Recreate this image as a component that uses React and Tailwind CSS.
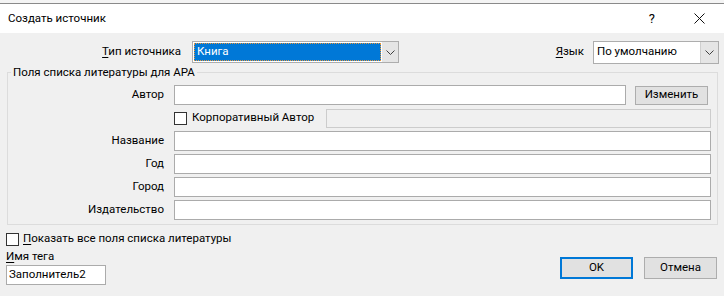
import React from "react";

const font = { fontFamily: 'Roboto, "Noto Sans", sans-serif' };

function Chevron() {
  return (
    <svg width="9" height="5" viewBox="0 0 9 5" fill="none">
      <path d="M0.5 0.5 L4.5 4.5 L8.5 0.5" stroke="#404040" strokeWidth="1" />
    </svg>
  );
}

function Field({ className = "" }) {
  return <div className={"h-[20px] border border-[#ababab] bg-white " + className} />;
}

function Row({ label, children }) {
  return (
    <div className="flex h-[20px] items-center">
      <div className="w-[156px] shrink-0 text-right leading-none">{label}</div>
      <div className="ml-[10px] flex flex-1 items-center">{children}</div>
    </div>
  );
}

function Checkbox() {
  return <div className="h-[13px] w-[13px] shrink-0 border border-[#333333] bg-white" />;
}

export default function App() {
  return (
    <div
      className="h-[296px] w-[724px] overflow-hidden bg-[#f0f0f0] text-[11.5px] text-black"
      style={font}
    >
      <div className="h-[3px] bg-[#f4f4f4]" />
      <div className="h-px bg-[#8a8a8a]" />
      <div className="flex h-[29px] items-center bg-white pl-[8px]">
        <span className="leading-none">Создать источник</span>
        <div className="flex-1" />
        <span className="text-[13px] leading-none">?</span>
        <div className="ml-[39px] mr-[19px]">
          <svg width="11" height="11" viewBox="0 0 11 11">
            <path d="M0.5 0.5 L10.5 10.5 M10.5 0.5 L0.5 10.5" stroke="#111" strokeWidth="1" />
          </svg>
        </div>
      </div>

      {/* top row */}
      <div className="mt-[8px] flex h-[22px] items-center">
        <div className="w-[181px] text-right leading-none">
          <span className="underline underline-offset-2">Т</span>ип источника
        </div>
        <div className="ml-[11px] flex h-[22px] w-[207px] border border-[#adadad] bg-white">
          <div className="m-px flex flex-1 items-center border border-dotted border-[#e9963a] bg-[#0078d7] pl-[2px] text-white leading-none">
            Книга
          </div>
          <div className="flex w-[16px] items-center justify-center bg-[#e5e5e5]">
            <Chevron />
          </div>
        </div>
        <div className="flex-1" />
        <div className="leading-none">
          <span className="underline underline-offset-2">Я</span>зык
        </div>
        <div className="ml-[9px] mr-[5px] flex h-[23px] w-[126px] border border-[#adadad] bg-white">
          <div className="flex flex-1 items-center pl-[3px] leading-none">По умолчанию</div>
          <div className="flex w-[18px] items-center justify-center border-l border-[#cfcfcf] bg-[#e5e5e5]">
            <Chevron />
          </div>
        </div>
      </div>

      {/* group box */}
      <div className="relative ml-[7px] mt-[9px] h-[153px] w-[711px] border border-[#dcdcdc]">
        <span className="absolute left-[3px] top-[-9px] bg-[#f0f0f0] px-[2px] leading-[16px]">
          Поля списка литературы для APA
        </span>
        <div className="flex flex-col gap-[3px] pr-[6px] pt-[12px]">
          <Row label="Автор">
            <Field className="w-[452px]" />
            <div className="ml-[9px] flex h-[19px] w-[73px] items-center justify-center border border-[#adadad] bg-[#e1e1e1] leading-none">
              Изменить
            </div>
          </Row>
          <Row label="">
            <Checkbox />
            <span className="ml-[5px] leading-none">Корпоративный Автор</span>
            <div className="ml-auto h-[19px] w-[385px] border border-[#cccccc] bg-[#f0f0f0]" />
          </Row>
          <Row label="Название">
            <Field className="flex-1" />
          </Row>
          <Row label="Год">
            <Field className="flex-1" />
          </Row>
          <Row label="Город">
            <Field className="flex-1" />
          </Row>
          <Row label="Издательство">
            <Field className="flex-1" />
          </Row>
        </div>
      </div>

      {/* bottom */}
      <div className="flex justify-between">
        <div className="pl-[6px]">
          <div className="mt-[7px] flex h-[14px] items-center">
            <Checkbox />
            <span className="ml-[4px] leading-none">
              <span className="underline underline-offset-2">П</span>оказать все поля списка литературы
            </span>
          </div>
          <div className="mt-[2px] h-[16px] leading-[16px]">
            <span className="underline underline-offset-2">И</span>мя тега
          </div>
          <div className="mt-[1px] flex h-[20px] w-[100px] items-center border border-[#ababab] bg-white pl-[2px] leading-none">
            Заполнитель2
          </div>
        </div>
        <div className="mr-[7px] flex gap-[11px] pt-[32px]">
          <div className="flex h-[22px] w-[73px] items-center justify-center border-2 border-[#0078d7] bg-[#e1e1e1] leading-none">
            OK
          </div>
          <div className="flex h-[22px] w-[73px] items-center justify-center border border-[#adadad] bg-[#e1e1e1] leading-none">
            Отмена
          </div>
        </div>
      </div>
    </div>
  );
}
